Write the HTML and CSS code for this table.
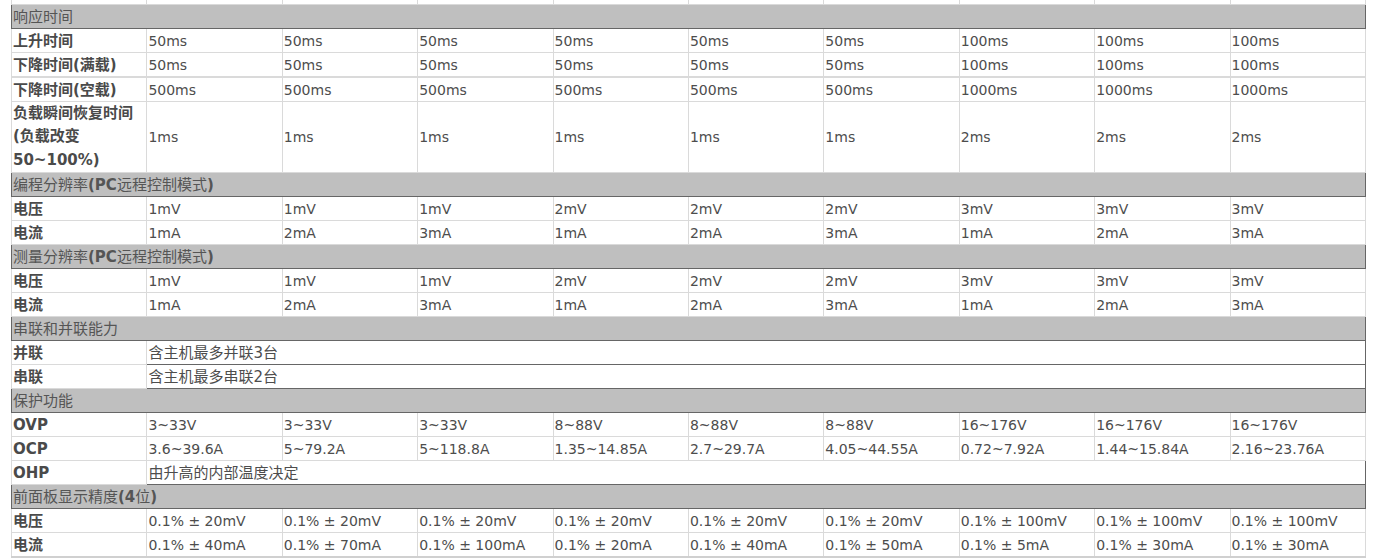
FILE: index.html
```html
<!DOCTYPE html>
<html lang="zh-CN">
<head>
<meta charset="utf-8">
<title>规格表</title>
<link rel="stylesheet" href="styles.css">
</head>
<body>
<div class="page">
<table class="spec">
<colgroup>
<col class="c"><col class="c"><col class="c"><col class="c"><col class="c"><col class="c"><col class="c"><col class="c"><col class="c"><col class="c">
</colgroup>
<tbody>
<tr><td class="lbl">电流</td><td></td><td></td><td></td><td></td><td></td><td></td><td></td><td></td><td></td></tr>

<tr class="sec"><td colspan="10">响应时间</td></tr>
<tr><td class="lbl">上升时间</td><td>50ms</td><td>50ms</td><td>50ms</td><td>50ms</td><td>50ms</td><td>50ms</td><td>100ms</td><td>100ms</td><td>100ms</td></tr>
<tr><td class="lbl">下降时间(满载)</td><td>50ms</td><td>50ms</td><td>50ms</td><td>50ms</td><td>50ms</td><td>50ms</td><td>100ms</td><td>100ms</td><td>100ms</td></tr>
<tr class="dbl"><td class="lbl">下降时间(空载)</td><td>500ms</td><td>500ms</td><td>500ms</td><td>500ms</td><td>500ms</td><td>500ms</td><td>1000ms</td><td>1000ms</td><td>1000ms</td></tr>
<tr class="tall"><td class="lbl multi">负载瞬间恢复时间<br>(负载改变<br>50~100%)</td><td>1ms</td><td>1ms</td><td>1ms</td><td>1ms</td><td>1ms</td><td>1ms</td><td>2ms</td><td>2ms</td><td>2ms</td></tr>

<tr class="sec"><td colspan="10">编程分辨率<b>(PC</b>远程控制模式<b>)</b></td></tr>
<tr><td class="lbl">电压</td><td>1mV</td><td>1mV</td><td>1mV</td><td>2mV</td><td>2mV</td><td>2mV</td><td>3mV</td><td>3mV</td><td>3mV</td></tr>
<tr><td class="lbl">电流</td><td>1mA</td><td>2mA</td><td>3mA</td><td>1mA</td><td>2mA</td><td>3mA</td><td>1mA</td><td>2mA</td><td>3mA</td></tr>

<tr class="sec"><td colspan="10">测量分辨率<b>(PC</b>远程控制模式<b>)</b></td></tr>
<tr><td class="lbl">电压</td><td>1mV</td><td>1mV</td><td>1mV</td><td>2mV</td><td>2mV</td><td>2mV</td><td>3mV</td><td>3mV</td><td>3mV</td></tr>
<tr><td class="lbl">电流</td><td>1mA</td><td>2mA</td><td>3mA</td><td>1mA</td><td>2mA</td><td>3mA</td><td>1mA</td><td>2mA</td><td>3mA</td></tr>

<tr class="sec"><td colspan="10">串联和并联能力</td></tr>
<tr><td class="lbl">并联</td><td class="span" colspan="9">含主机最多并联3台</td></tr>
<tr><td class="lbl">串联</td><td class="span" colspan="9">含主机最多串联2台</td></tr>

<tr class="sec"><td colspan="10">保护功能</td></tr>
<tr><td class="lbl">OVP</td><td>3~33V</td><td>3~33V</td><td>3~33V</td><td>8~88V</td><td>8~88V</td><td>8~88V</td><td>16~176V</td><td>16~176V</td><td>16~176V</td></tr>
<tr><td class="lbl">OCP</td><td>3.6~39.6A</td><td>5~79.2A</td><td>5~118.8A</td><td>1.35~14.85A</td><td>2.7~29.7A</td><td>4.05~44.55A</td><td>0.72~7.92A</td><td>1.44~15.84A</td><td>2.16~23.76A</td></tr>
<tr><td class="lbl">OHP</td><td class="span" colspan="9">由升高的内部温度决定</td></tr>

<tr class="sec"><td colspan="10">前面板显示精度<b>(4</b>位<b>)</b></td></tr>
<tr><td class="lbl">电压</td><td>0.1% ± 20mV</td><td>0.1% ± 20mV</td><td>0.1% ± 20mV</td><td>0.1% ± 20mV</td><td>0.1% ± 20mV</td><td>0.1% ± 20mV</td><td>0.1% ± 100mV</td><td>0.1% ± 100mV</td><td>0.1% ± 100mV</td></tr>
<tr class="last"><td class="lbl">电流</td><td>0.1% ± 40mA</td><td>0.1% ± 70mA</td><td>0.1% ± 100mA</td><td>0.1% ± 20mA</td><td>0.1% ± 40mA</td><td>0.1% ± 50mA</td><td>0.1% ± 5mA</td><td>0.1% ± 30mA</td><td>0.1% ± 30mA</td></tr>
</tbody>
</table>
</div>
</body>
</html>
```

FILE: styles.css
```css
html, body {
  margin: 0;
  padding: 0;
  background: #ffffff;
}

.page {
  padding: 0 0 0 11px;
  overflow: hidden;
  height: 559px;
}

.spec {
  margin-top: -20px;
  width: 1355px;
  table-layout: fixed;
  border-collapse: collapse;
  border-left: 1px solid #666666;
  font-family: "DejaVu Sans", "Noto Sans CJK SC", sans-serif;
  font-size: 14px;
  color: #4d4d4d;
}

.spec .c {
  width: 10%;
}

.spec td {
  border: 1px solid #dadada;
  padding: 1px 1px 0 1px;
  line-height: 22px;
  vertical-align: middle;
  white-space: nowrap;
  overflow: hidden;
  text-align: left;
}

.spec td.lbl {
  font-size: 15px;
  font-weight: bold;
  color: #4a4a4a;
}

.spec td.multi {
  line-height: 23.3px;
  white-space: normal;
  padding-top: 0;
}

.spec td.span {
  font-size: 15px;
  border-top: 1px solid #666666;
  border-bottom: 1px solid #666666;
  border-right: 1px solid #666666;
}

.spec tr.dbl td {
  border-top: 2px solid #dadada;
}

.spec tr.last td {
  border-bottom: 2px solid #d0d0d0;
}

.spec tr.sec td {
  background: #bfbfbf;
  border: 1px solid #666666;
  border-top: 1px solid #dadada;
  font-size: 15px;
  color: #555555;
  font-weight: normal;
}

.spec tr.sec b {
  font-weight: bold;
}
```
